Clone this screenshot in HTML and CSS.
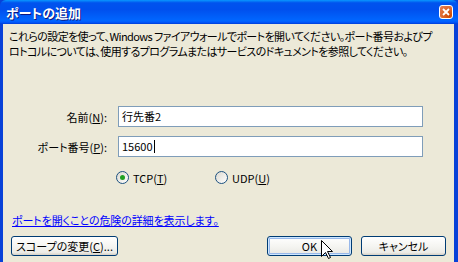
FILE: index.html
```
<!DOCTYPE html>
<html lang="ja">
<head>
    <meta charset="UTF-8">
    <title>ポートの追加</title>
    <link rel="stylesheet" href="styles.css">
</head>
<body>
    <div class="window">
        <div class="titlebar">
            <span class="title">ポートの追加</span>
            <span class="close">
                <svg width="8" height="8" viewBox="0 0 8 8"><path d="M1 1L7 7M7 1L1 7" stroke="#fff" stroke-width="1.8"/></svg>
            </span>
        </div>
        <div class="content">
            <p class="intro">これらの設定を使って、Windows ファイアウォールでポートを開いてください。ポート番号およびプ<br>ロトコルについては、使用するプログラムまたはサービスのドキュメントを参照してください。</p>
            <div class="fields">
                <span class="label">名前(<u>N</u>):</span>
                <div class="textbox">行先番2</div>
                <span class="label">ポート番号(<u>P</u>):</span>
                <div class="textbox">15600<span class="caret"></span></div>
            </div>
            <div class="radios">
                <span class="radio checked"></span><span class="radio-text tcp">TCP(<u>T</u>)</span>
                <span class="radio"></span><span class="radio-text">UDP(<u>U</u>)</span>
            </div>
            <a href="#" class="link">ポートを開くことの危険の詳細を表示します。</a>
            <div class="buttons">
                <span class="btn scope">スコープの変更(<u>C</u>)...</span>
                <span class="spacer"></span>
                <span class="btn default">OK</span>
                <span class="btn">キャンセル</span>
            </div>
        </div>
        <svg class="cursor" width="12" height="19" viewBox="0 0 12 19">
            <path d="M0.5 0.5V16.5L4.5 12.5L7.5 18.5L9.5 17.5L6.5 11.5H11.5Z" fill="#fff" stroke="#000" stroke-width="1"/>
        </svg>
    </div>
</body>
</html>
```

FILE: styles.css
```
*
{
    box-sizing: border-box;
}

body
{
    margin: 0;
    font-family: "Noto Sans CJK JP", "Liberation Sans", sans-serif;
    font-size: 11px;
    font-feature-settings: "palt";
}

.window
{
    position: relative;
    width: 458px;
    height: 262px;
    display: flex;
    flex-direction: column;
    background: #0841d8;
    padding: 0 4px 4px 3px;
    overflow: hidden;
}

.titlebar
{
    height: 24px;
    flex: none;
    margin: 0 -4px 0 -3px;
    padding: 0 5px 0 6px;
    display: flex;
    align-items: center;
    justify-content: space-between;
    background: linear-gradient(#0997ff, #0053ee 12%, #0050ee 40%, #0066ff 85%, #005bff 92%, #003dd7);
    border-radius: 6px 6px 0 0;
}

.title
{
    color: #fff;
    font-weight: bold;
    font-size: 13px;
    text-shadow: 1px 1px #0a1883;
}

.close
{
    width: 14px;
    height: 14px;
    border: 1px solid #fff;
    border-radius: 3px;
    background: radial-gradient(circle at 80% 80%, #cc4600, #dc6527 45%, #e5805a);
    display: flex;
    align-items: center;
    justify-content: center;
}

.content
{
    flex: 1;
    background: #ece9d8;
    padding: 5px 8px 6px 6px;
    display: flex;
    flex-direction: column;
}

.intro
{
    margin: 0;
    line-height: 15px;
    letter-spacing: -0.6px;
    white-space: nowrap;
}

.fields
{
    display: grid;
    grid-template-columns: 98px 305px;
    column-gap: 11px;
    row-gap: 9px;
    align-items: center;
    margin-top: 47px;
}

.label
{
    text-align: right;
}

.textbox
{
    height: 21px;
    background: #fff;
    border: 1px solid #7f9db9;
    padding: 0 3px;
    line-height: 19px;
    display: flex;
    align-items: center;
}

.caret
{
    width: 1px;
    height: 13px;
    background: #000;
    margin-left: 1px;
}

.radios
{
    display: flex;
    align-items: center;
    margin: 14px 0 0 107px;
    height: 13px;
}

.radio
{
    width: 13px;
    height: 13px;
    border: 1px solid #1c5180;
    border-radius: 50%;
    background: linear-gradient(135deg, #dcd9cf, #fff);
    display: flex;
    align-items: center;
    justify-content: center;
}

.radio.checked::after
{
    content: "";
    width: 5px;
    height: 5px;
    border-radius: 50%;
    background: #21a121;
}

.radio-text
{
    margin-left: 4px;
}

.tcp
{
    width: 82px;
}

.link
{
    margin-top: 29px;
    line-height: 15px;
    color: #0000ff;
    align-self: flex-start;
    padding-left: 3px;
    letter-spacing: -0.1px;
}

.buttons
{
    margin-top: 8px;
    display: flex;
    gap: 9px;
    padding-left: 2px;
}

.spacer
{
    flex: 1;
}

.btn
{
    height: 20px;
    width: 85px;
    border: 1px solid #003c74;
    border-radius: 3px;
    background: linear-gradient(#ffffff, #f3f3ef 60%, #ecebe6 86%, #d6d0c5);
    display: flex;
    align-items: center;
    justify-content: center;
    white-space: nowrap;
}

.scope
{
    width: 107px;
}

.default
{
    box-shadow: inset 0 0 0 1px #cee7ff, inset 0 0 0 2px #98b8ea;
}

.cursor
{
    position: absolute;
    left: 321px;
    top: 240px;
}
```
